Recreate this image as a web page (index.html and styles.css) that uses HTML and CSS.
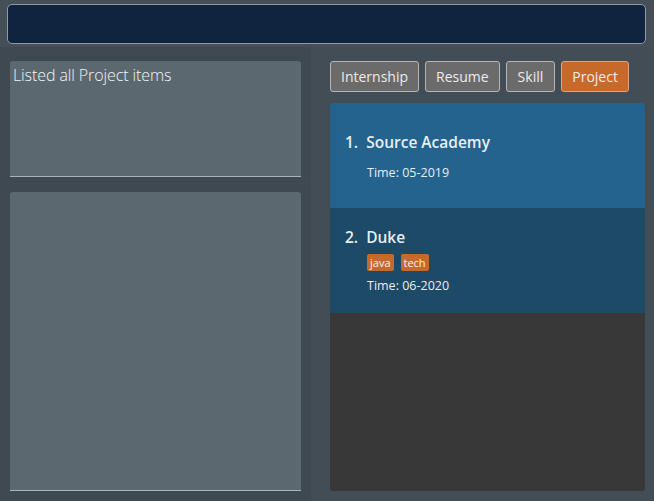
FILE: index.html
```html
<!DOCTYPE html>
<html>
<head>
<meta charset="utf-8">
<link rel="stylesheet" href="styles.css">
</head>
<body>
<div class="command-bar">
  <div class="command-box"></div>
</div>
<div class="main">
  <div class="left-col">
    <div class="result-panel">
      <div class="result-box">Listed all Project items</div>
    </div>
    <div class="detail-panel">
      <div class="detail-box"></div>
    </div>
  </div>
  <div class="splitter"></div>
  <div class="right-col">
    <div class="tabs">
      <button class="tab">Internship</button>
      <button class="tab">Resume</button>
      <button class="tab tab-skill">Skill</button>
      <button class="tab active">Project</button>
    </div>
    <div class="list">
      <div class="card card-odd">
        <div class="card-title">1.  Source Academy</div>
        <div class="card-time">Time: 05-2019</div>
      </div>
      <div class="card card-even">
        <div class="card-title">2.  Duke</div>
        <div class="tags"><span class="tag">java</span><span class="tag">tech</span></div>
        <div class="card-time">Time: 06-2020</div>
      </div>
    </div>
  </div>
</div>
</body>
</html>
```
FILE: styles.css
```css
html, body {
  margin: 0;
  padding: 0;
  height: 100%;
}
body {
  background: #464f57;
  font-family: "Open Sans", "Noto Sans", sans-serif;
  overflow: hidden;
}
.command-bar {
  padding: 4px 8px 0 7px;
  height: 47px;
  box-sizing: border-box;
}
.command-box {
  height: 40px;
  box-sizing: border-box;
  background: #102440;
  border: 1px solid #8d9bab;
  border-radius: 5px;
}
.main {
  display: flex;
  height: 454px;
}
.left-col {
  width: 311px;
  display: flex;
  flex-direction: column;
  background: #3f4951;
}
.result-panel {
  padding: 14px 9px 0 9px;
  height: 137px;
  box-sizing: border-box;
  border-bottom: 1px solid #414b53;
}
.result-box {
  height: 115px;
  box-sizing: border-box;
  margin-left: 1px;
  margin-right: 1px;
  background: #5b6870;
  border-radius: 3px 3px 0 0;
  box-shadow: 0 1px 0 0 #a9b3bb;
  color: #f0f5f9;
  font-size: 16px;
  font-weight: 300;
  padding: 3px 3px;
  letter-spacing: -0.1px;
}
.detail-panel {
  flex: 1;
  padding: 8px 9px 0 9px;
}
.detail-box {
  height: 298px;
  margin-left: 1px;
  margin-right: 1px;
  background: #5b6870;
  border-radius: 3px 3px 0 0;
  box-shadow: 0 1px 0 0 #a9b3bb;
}
.splitter {
  width: 2px;
  background: #434d55;
}
.right-col {
  flex: 1;
  background: #434d55;
  padding: 14px 9px 0 17px;
  display: flex;
  flex-direction: column;
}
.tabs {
  display: flex;
  gap: 6px;
  height: 31px;
}
.tab {
  font-family: inherit;
  font-size: 14px;
  color: #ececec;
  background: #6b6b6b;
  border: 1px solid #b6b6b6;
  border-radius: 3px;
  padding: 0 10px;
  height: 31px;
  cursor: pointer;
}
.tab-skill {
  padding: 0 11px;
}
.tab.active {
  background: #c8692c;
  border-color: #e2a37a;
}
.list {
  margin-top: 11px;
  height: 388px;
  background: #383838;
  border-radius: 2px;
  overflow: hidden;
}
.card {
  height: 105px;
  box-sizing: border-box;
  display: flex;
  flex-direction: column;
  justify-content: center;
  padding-left: 15px;
  color: #e8eef3;
}
.card-odd {
  background: #24638e;
  padding-top: 2px;
}
.card-even {
  background: #1d4a66;
}
.card-title {
  white-space: pre;
  font-size: 15.5px;
  font-weight: 600;
  height: 22px;
  line-height: 22px;
}
.card-odd .card-title {
  margin-bottom: 11px;
}
.tags {
  display: flex;
  gap: 7px;
  margin: 6px 0 6px 22px;
}
.tag {
  background: #c8692c;
  color: #f3f3f3;
  font-size: 11px;
  height: 17px;
  line-height: 17px;
  padding: 0 3px;
  border-radius: 2px;
}
.card-time {
  font-size: 12.5px;
  margin-left: 22px;
  height: 18px;
  line-height: 18px;
}
```
